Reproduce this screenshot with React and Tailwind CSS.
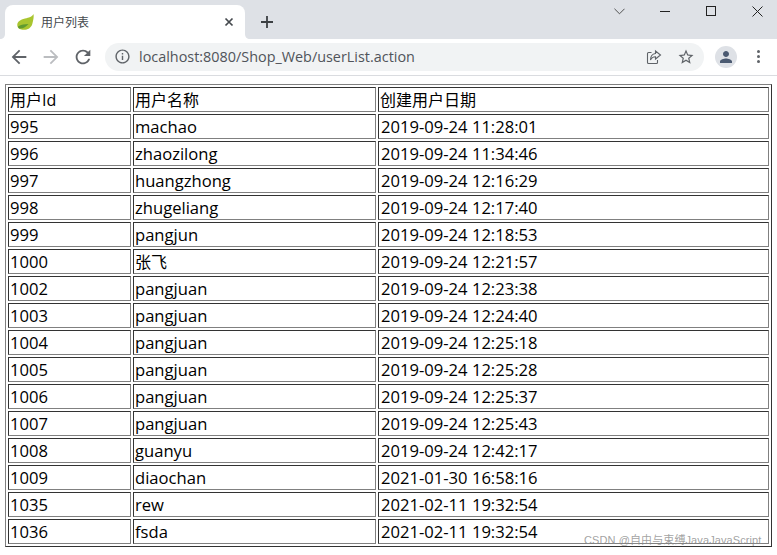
import React from "react";

const rows = [
  ["995", "machao", "2019-09-24 11:28:01"],
  ["996", "zhaozilong", "2019-09-24 11:34:46"],
  ["997", "huangzhong", "2019-09-24 12:16:29"],
  ["998", "zhugeliang", "2019-09-24 12:17:40"],
  ["999", "pangjun", "2019-09-24 12:18:53"],
  ["1000", "张飞", "2019-09-24 12:21:57"],
  ["1002", "pangjuan", "2019-09-24 12:23:38"],
  ["1003", "pangjuan", "2019-09-24 12:24:40"],
  ["1004", "pangjuan", "2019-09-24 12:25:18"],
  ["1005", "pangjuan", "2019-09-24 12:25:28"],
  ["1006", "pangjuan", "2019-09-24 12:25:37"],
  ["1007", "pangjuan", "2019-09-24 12:25:43"],
  ["1008", "guanyu", "2019-09-24 12:42:17"],
  ["1009", "diaochan", "2021-01-30 16:58:16"],
  ["1035", "rew", "2021-02-11 19:32:54"],
  ["1036", "fsda", "2021-02-11 19:32:54"],
];

const cell =
  "h-[25px] p-0 pl-[1px] text-left font-normal align-middle whitespace-nowrap border border-t-[#333] border-l-[#333] border-r-[#808080] border-b-[#808080]";

function Icon({ d, className }) {
  return (
    <svg viewBox="0 0 24 24" className={className} fill="currentColor">
      <path d={d} />
    </svg>
  );
}

function Leaf() {
  return (
    <svg viewBox="0 0 17 16" className="w-[17px] h-[16px]">
      <path d="M16.500 0C15 3 12 3.500 8 4.500 3 5.700 0 8 .3 11.500c.2 2 1.500 3.500 4 4 5 .8 9.500-.5 11-5.500 1-3.500 1.700-7 1.200-10z" fill="#a9c52f" />
      <path d="M1 12.500c3-1.800 7-2.500 10.500-2.500-2.500 2.800-5.500 5-9.500 4.500-.6-.5-1-1.300-1-2z" fill="#5f9a30" />
    </svg>
  );
}

function TabBar() {
  return (
    <div className="h-[39px] bg-[#dee1e6] flex items-end relative">
      <div className="relative ml-[5px] w-[240px] h-[34px] bg-white rounded-t-lg flex items-center pl-[12px] pr-[11px]">
        <svg viewBox="0 0 5 5" className="absolute left-[-5px] bottom-0 w-[5px] h-[5px]">
          <path d="M5 0v5H0C3 5 5 3 5 0z" fill="#fff" />
        </svg>
        <svg viewBox="0 0 5 5" className="absolute right-[-5px] bottom-0 w-[5px] h-[5px]">
          <path d="M0 0v5h5C2 5 0 3 0 0z" fill="#fff" />
        </svg>
        <Leaf />
        <span className="ml-[7px] text-[12px] text-[#45494e] font-['Noto_Sans_CJK_SC',sans-serif]">用户列表</span>
        <svg viewBox="0 0 10 10" className="ml-auto w-[10px] h-[10px] text-[#45494e]" stroke="currentColor" strokeWidth="1.700">
          <path d="M1.500 1.500l7 7M8.500 1.500l-7 7" />
        </svg>
      </div>
      <svg viewBox="0 0 14 14" className="ml-[15px] mb-[10px] w-[14px] h-[14px] text-[#3c4043]" stroke="currentColor" strokeWidth="1.800">
        <path d="M7 1v12M1 7h12" />
      </svg>
      <div className="absolute top-0 right-[-3px] flex text-[#222]">
        <div className="w-[46px] h-[22px] flex items-center justify-center">
          <svg viewBox="0 0 12 7" className="w-[11px] h-[7px]" fill="none" stroke="#444" strokeWidth="1">
            <path d="M.5.500L6 6l5.500-5.500" />
          </svg>
        </div>
        <div className="w-[46px] h-[22px] flex items-center justify-center">
          <div className="w-[10px] h-[1px] bg-[#222]" />
        </div>
        <div className="w-[46px] h-[22px] flex items-center justify-center">
          <div className="w-[10px] h-[10px] border border-[#222]" />
        </div>
        <div className="w-[46px] h-[22px] flex items-center justify-center">
          <svg viewBox="0 0 11 11" className="w-[11px] h-[11px]" stroke="#222" strokeWidth="1">
            <path d="M.5.500l10 10M10.500.500l-10 10" />
          </svg>
        </div>
      </div>
    </div>
  );
}

function Toolbar() {
  return (
    <div className="h-[37px] bg-white border-b border-[#dadce0] flex items-center pb-[1px]">
      <Icon className="ml-[8px] w-[22px] h-[22px] text-[#5f6368]" d="M20 11H7.830l5.590-5.590L12 4l-8 8 8 8 1.410-1.410L7.830 13H20v-2z" />
      <Icon className="ml-[10px] w-[22px] h-[22px] text-[#bbbdc0]" d="M12 4l-1.410 1.410L16.170 11H4v2h12.170l-5.580 5.590L12 20l8-8z" />
      <Icon className="ml-[10px] w-[22px] h-[22px] text-[#5f6368]" d="M17.650 6.350C16.200 4.900 14.210 4 12 4c-4.420 0-7.990 3.580-7.990 8s3.570 8 7.990 8c3.730 0 6.840-2.550 7.730-6h-2.080c-.82 2.330-3.040 4-5.650 4-3.310 0-6-2.690-6-6s2.690-6 6-6c1.660 0 3.140.69 4.220 1.780L13 11h7V4l-2.350 2.350z" />
      <div className="ml-[11px] w-[599px] h-[28px] rounded-full bg-[#f1f3f4] flex items-center pl-[9px] pr-[9px]">
        <Icon className="w-[17px] h-[17px] text-[#5f6368]" d="M11 7h2v2h-2zm0 4h2v6h-2zm1-9C6.480 2 2 6.480 2 12s4.480 10 10 10 10-4.480 10-10S17.520 2 12 2zm0 18c-4.410 0-8-3.590-8-8s3.590-8 8-8 8 3.590 8 8-3.590 8-8 8z" />
        <span className="ml-[8px] text-[14.4px] font-['Open_Sans',sans-serif] text-[#50545a]">
          localhost:8080/Shop_Web/userList.action
        </span>
        <svg viewBox="0 0 16 16" className="ml-auto w-[16px] h-[16px] text-[#5f6368]" fill="none" stroke="currentColor" strokeWidth="1.100">
          <path d="M5.500 3.500H2.500a1 1 0 00-1 1v9a1 1 0 001 1h8a1 1 0 001-1v-2.500" />
          <path d="M9.500 2l5 4-5 4V7.700C7 7.700 5.500 8.500 4.500 11c0-3.500 1.500-6 5-6.500z" />
        </svg>
        <Icon className="ml-[15px] w-[18px] h-[18px] text-[#5f6368]" d="M22 9.240l-7.190-.62L12 2 9.190 8.630 2 9.240l5.460 4.730L5.820 21 12 17.270 18.180 21l-1.630-7.030L22 9.240zM12 15.400l-3.760 2.270 1-4.280-3.320-2.880 4.380-.38L12 6.100l1.710 4.040 4.380.38-3.320 2.880 1 4.280L12 15.400z" />
      </div>
      <div className="ml-[11px] w-[22px] h-[22px] rounded-full bg-[#dee1e6] flex items-center justify-center">
        <Icon className="w-[18px] h-[18px] text-[#4b5a71]" d="M12 12c2.210 0 4-1.790 4-4s-1.790-4-4-4-4 1.790-4 4 1.790 4 4 4zm0 2c-2.670 0-8 1.340-8 4v2h16v-2c0-2.660-5.330-4-8-4z" />
      </div>
      <div className="ml-[20px] flex flex-col gap-[2px]">
        <div className="w-[3px] h-[3px] rounded-full bg-[#5f6368]" />
        <div className="w-[3px] h-[3px] rounded-full bg-[#5f6368]" />
        <div className="w-[3px] h-[3px] rounded-full bg-[#5f6368]" />
      </div>
    </div>
  );
}

export default function App() {
  return (
    <div className="relative w-[777px] h-[555px] overflow-hidden bg-white">
      <TabBar />
      <Toolbar />
      <div className="pt-[8px] pl-[5px]">
        <table className="table-fixed w-[767px] border-separate border-spacing-0.5 border border-t-[#808080] border-l-[#808080] border-r-[#333] border-b-[#333] text-[16px] leading-[22px] text-black font-['Open_Sans','Noto_Sans_CJK_SC',sans-serif]">
          <colgroup>
            <col className="w-[123px]" />
            <col className="w-[243px]" />
            <col />
          </colgroup>
          <thead>
            <tr>
              <th className={cell}>用户Id</th>
              <th className={cell}>用户名称</th>
              <th className={cell}>创建用户日期</th>
            </tr>
          </thead>
          <tbody className="text-[16.6px]">
            {rows.map((r) => (
              <tr key={r[0]}>
                <td className={cell}>{r[0]}</td>
                <td className={cell}>
                  {r[1] === "张飞" ? <span className="text-[16px]">{r[1]}</span> : r[1]}
                </td>
                <td className={cell}>
                  <span className="ml-[1px]">{r[2]}</span>
                </td>
              </tr>
            ))}
          </tbody>
        </table>
      </div>
      <div className="absolute left-[584px] top-[533px] text-[11px] leading-[14px] tracking-[0.1px] text-[#8a8a8a]/80 whitespace-nowrap font-['Liberation_Sans','Noto_Sans_CJK_SC',sans-serif]">
        CSDN @自由与束缚JavaJavaScript
      </div>
    </div>
  );
}
